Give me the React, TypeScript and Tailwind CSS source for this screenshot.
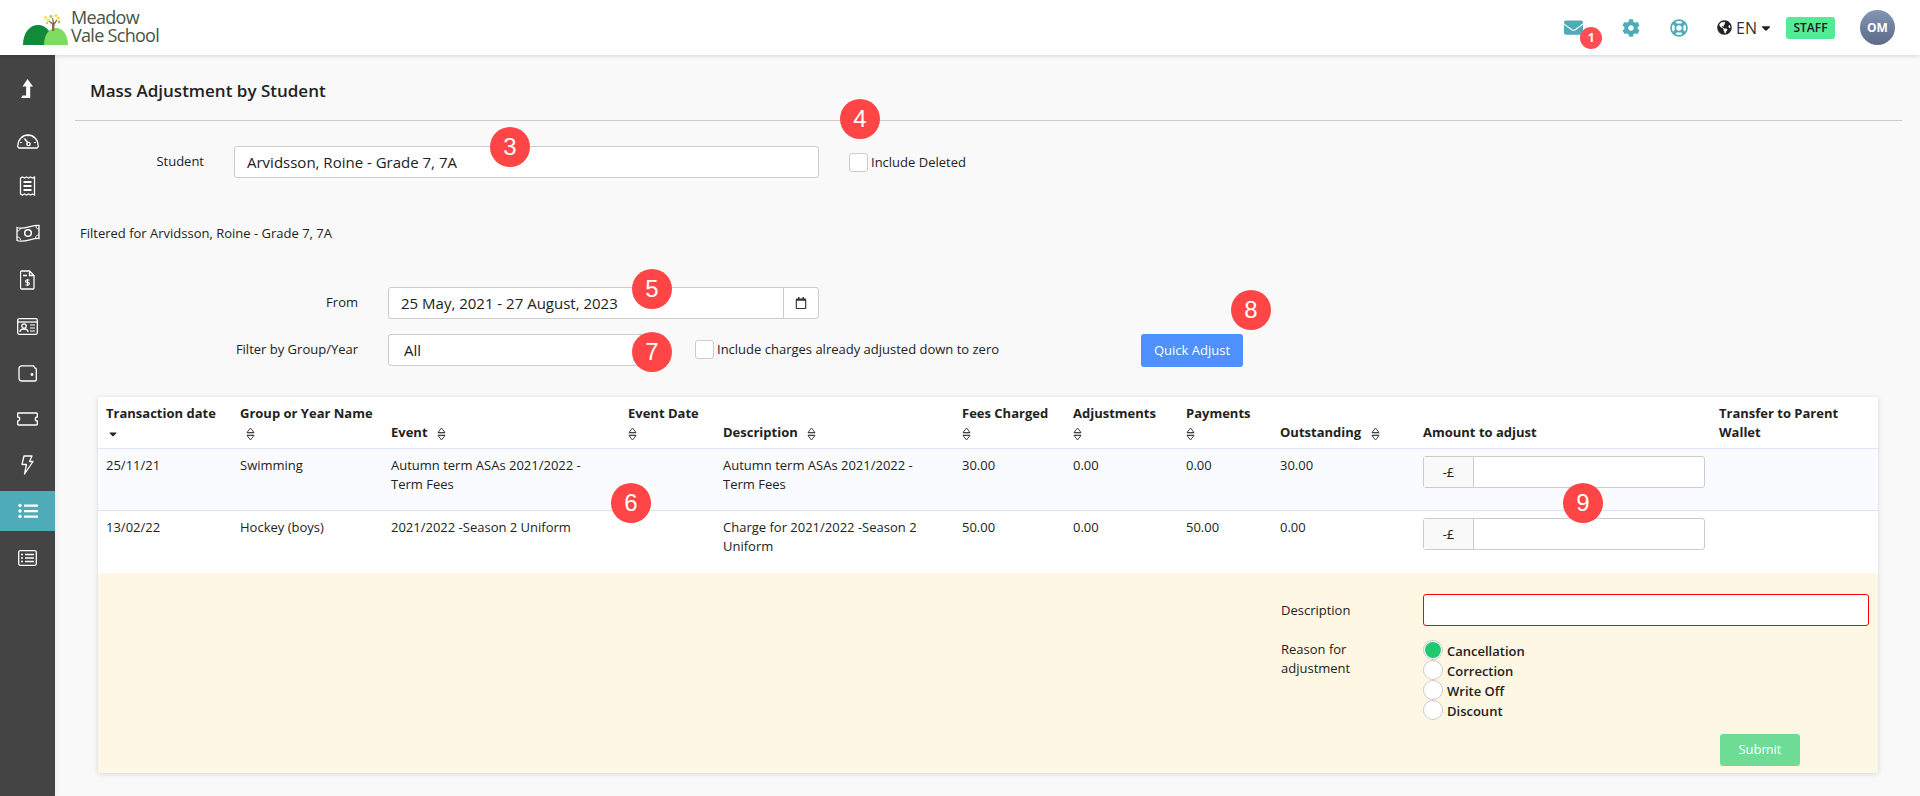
import { FaCaretDown, FaCog, FaEnvelope, FaGlobeAmericas, FaRegCalendar, FaRegLifeRing } from 'react-icons/fa';

function NumberPin({ n, pos }: { n: number; pos: string }) {
  return (
    <div className={`absolute z-20 flex h-10 w-10 items-center justify-center rounded-full bg-[#ff4545] text-[24px] leading-none text-white [font-family:'Liberation_Sans',sans-serif] ${pos}`}>
      {n}
    </div>
  );
}

function SortIcon({ className = '' }: { className?: string }) {
  return (
    <svg width="9" height="14" viewBox="0 0 9 14" className={`inline-block ${className}`}>
      <path d="M4.5 1 8 5.5H1Z" fill="none" stroke="#444" strokeWidth="1" />
      <path d="M1 8.5h7L4.5 13Z" fill="none" stroke="#444" strokeWidth="1" />
      <path d="M1 7h7" stroke="#444" strokeWidth="0.6" />
    </svg>
  );
}

function Logo() {
  return (
    <div className="flex items-center">
      <svg width="45" height="32" viewBox="0 0 45 32" className="mt-[4px]">
        <path d="M0 31C0 18 7 11 15 11s15 7 15 20Z" fill="#128a3c" />
        <path d="M21 31c0-10 5-17 12-17s12 7 12 17Z" fill="#7ddb5f" />
        <path d="M29 17h2.2l.3-6 3-5-1-.6-2.4 3.400-1-4.800h-1l.5 5-3.500-2.500-.6.8 3.600 3.400Z" fill="#8a6a3f" />
        <circle cx="22.500" cy="3.500" r="1.500" fill="#f2e04a" />
        <circle cx="25" cy="6" r="1.500" fill="#f2e04a" />
        <circle cx="33" cy="1.500" r="1.500" fill="#f2e04a" />
        <circle cx="35.500" cy="4" r="1.600" fill="#f2e04a" />
        <circle cx="28" cy="2.500" r="1.400" fill="#9fc85a" />
        <circle cx="36" cy="8" r="1.400" fill="#9fc85a" />
        <circle cx="24" cy="9" r="1" fill="#9fc85a" />
      </svg>
      <div className="mb-[3px] ml-[3px] text-[18px] leading-[18px] tracking-[-0.7px] text-[#47553f]">
        Meadow<br />Vale School
      </div>
    </div>
  );
}

function Header() {
  return (
    <header className="relative z-10 flex h-[55px] items-center bg-white pl-[23px] pr-[25px] shadow-[0_1px_4px_rgba(0,0,0,0.15)]">
      <Logo />
      <div className="ml-auto flex items-center">
        <div className="relative mr-[39px] h-[20px]">
          <FaEnvelope className="text-[19px] text-[#4eabb8]" />
          <span className="absolute left-[16px] top-[9px] flex h-[22px] w-[22px] items-center justify-center rounded-full bg-[#ff4d55] text-[12px] font-bold text-white">1</span>
        </div>
        <FaCog className="mr-[30px] text-[18px] text-[#4eabb8]" />
        <FaRegLifeRing className="mr-[29px] text-[18px] text-[#4eabb8]" />
        <FaGlobeAmericas className="mr-[4px] text-[15px] text-[#222]" />
        <span className="mr-[2px] text-[16px] text-[#333]">EN</span>
        <FaCaretDown className="mr-[13px] text-[14px] text-[#222]" />
        <span className="mr-[25px] flex h-[22px] w-[49px] items-center justify-center rounded-[3px] bg-[#55ea96] text-[12px] font-semibold text-[#1a1a1a]">STAFF</span>
        <span className="flex h-[35px] w-[35px] items-center justify-center rounded-full bg-gradient-to-b from-[#8296b5] to-[#5c6b85] text-[12px] font-bold text-white">OM</span>
      </div>
    </header>
  );
}

function UpArrowIcon() {
  return (
    <svg width="13" height="19" viewBox="0 0 13 19" fill="white">
      <path d="M6.500 0 12 7.500H9.200V19H0l1.500-2.500h3.600v-9H1.500Z" />
    </svg>
  );
}

function GaugeIcon() {
  return (
    <svg width="22" height="17" viewBox="0 0 22 17" fill="none" stroke="white" strokeWidth="1.300">
      <path d="M3 16h16a2 2 0 0 0 2-3A10 10 0 1 0 1 13a2 2 0 0 0 2 3Z" />
      <path d="M11 2.500v2M5 5l1.200 1.200M17 5l-1.200 1.200M3 10.500h1.800M19 10.500h-1.800" strokeWidth="1" />
      <path d="M7.500 6.500 11 11" strokeWidth="1.500" />
      <circle cx="11.500" cy="12" r="1.700" />
    </svg>
  );
}

function ReceiptIcon() {
  return (
    <svg width="17" height="20" viewBox="0 0 17 20" fill="none" stroke="white" strokeWidth="1.300">
      <path d="M1.500 2 3.500 1l2 1 2-1 2 1 2-1 2 1 2-1v18l-2-1-2 1-2-1-2 1-2-1-2 1-2-1Z" />
      <path d="M4.500 6h8M4.500 10h8M4.500 14h8" strokeWidth="1.800" />
    </svg>
  );
}

function MoneyIcon() {
  return (
    <svg width="24" height="18" viewBox="0 0 24 18" fill="none" stroke="white" strokeWidth="1.300">
      <path d="M1 3.500C8 6 15 1 23 1.500v13C16 14 8 19 1 16.500Z" />
      <circle cx="12" cy="9" r="3.300" strokeWidth="1.500" />
      <path d="M1 7c2 0 3-1 3.500-3M23 5c-2 0-3-1-3-3M1 13c2 0 3 .5 3.500 3M23 11c-2 0-3 .5-3.500 3" strokeWidth="1" />
    </svg>
  );
}

function FileDollarIcon() {
  return (
    <svg width="15" height="20" viewBox="0 0 15 20" fill="none" stroke="white" strokeWidth="1.300">
      <path d="M1.500 1h8l4.500 4.500V18a1 1 0 0 1-1 1H1.500a1 1 0 0 1-1-1V2a1 1 0 0 1 1-1Z" />
      <path d="M9.500 1v4.500H14M3 5.500h4" />
      <path d="M9.500 10H6.800a1.200 1.200 0 0 0 0 2.500h1.400a1.200 1.200 0 0 1 0 2.500H5.500M7.500 9v7" strokeWidth="1.100" />
    </svg>
  );
}

function IdCardIcon() {
  return (
    <svg width="21" height="17" viewBox="0 0 21 17" fill="none" stroke="white" strokeWidth="1.300">
      <rect x="0.700" y="0.700" width="19.600" height="15.600" rx="1.500" />
      <path d="M1 4h19" />
      <circle cx="7" cy="8" r="2.200" />
      <path d="M3 14c0-2 1.500-3 4-3s4 1 4 3" />
      <path d="M13 7h5M13 10h5M13 13h5" strokeWidth="1.200" />
    </svg>
  );
}

function WalletIcon() {
  return (
    <svg width="19" height="17" viewBox="0 0 19 17" fill="none" stroke="white" strokeWidth="1.300">
      <path d="M1 4.500V13a3 3 0 0 0 3 3h13a1.300 1.300 0 0 0 1.300-1.300V4.300A1.300 1.300 0 0 0 17 3L15.500.8H4a3 3 0 0 0-3 3.700Z" />
      <circle cx="14" cy="9.500" r="0.800" fill="white" />
    </svg>
  );
}

function TicketIcon() {
  return (
    <svg width="21" height="14" viewBox="0 0 21 14" fill="none" stroke="white" strokeWidth="1.300">
      <path d="M1.500 1h18a.8.8 0 0 1 .8.8V5a2 2 0 0 0 0 4v3.200a.8.8 0 0 1-.8.8h-18a.8.8 0 0 1-.8-.8V9a2 2 0 0 0 0-4V1.800a.8.8 0 0 1 .8-.8Z" />
    </svg>
  );
}

function BoltIcon() {
  return (
    <svg width="13" height="20" viewBox="0 0 13 20" fill="none" stroke="white" strokeWidth="1.300">
      <path d="M3 1h8L8.500 6.500H12L3.500 19l2-9.500H1Z" strokeLinejoin="round" />
    </svg>
  );
}

function ListIcon() {
  return (
    <svg width="20" height="16" viewBox="0 0 20 16" fill="white">
      <circle cx="2" cy="2.500" r="1.700" />
      <circle cx="2" cy="8" r="1.700" />
      <circle cx="2" cy="13.500" r="1.700" />
      <rect x="6" y="1.500" width="14" height="2.200" rx="0.500" />
      <rect x="6" y="7" width="14" height="2.200" rx="0.500" />
      <rect x="6" y="12.500" width="14" height="2.200" rx="0.500" />
    </svg>
  );
}

function ListBoxIcon() {
  return (
    <svg width="19" height="16" viewBox="0 0 19 16" fill="none" stroke="white" strokeWidth="1.300">
      <rect x="0.700" y="0.700" width="17.600" height="14.600" rx="1.500" />
      <path d="M7 4.500h9M7 8h9M7 11.500h9M3 4.500h2M3 8h2M3 11.500h2" strokeWidth="1.500" />
    </svg>
  );
}

function Sidebar() {
  const items = [
    { h: 'h-[46px]', icon: <GaugeIcon /> },
    { h: 'h-[46px]', icon: <ReceiptIcon /> },
    { h: 'h-[47px]', icon: <MoneyIcon /> },
    { h: 'h-[47px]', icon: <FileDollarIcon /> },
    { h: 'h-[47px]', icon: <IdCardIcon /> },
    { h: 'h-[46px]', icon: <WalletIcon /> },
    { h: 'h-[46px]', icon: <TicketIcon /> },
    { h: 'h-[46px]', icon: <BoltIcon /> },
  ];
  return (
    <aside className="flex w-[55px] shrink-0 flex-col items-stretch bg-[#444444] shadow-[2px_0_4px_rgba(0,0,0,0.05)]">
      <div className="flex h-[62px] items-center justify-center pt-[4px]">
        <UpArrowIcon />
      </div>
      {items.map((item, i) => (
        <div key={i} className={`flex items-center justify-center ${item.h}`}>
          {item.icon}
        </div>
      ))}
      <div className="mt-[3px] flex h-[40px] items-center justify-center bg-[#4eabb8]">
        <ListIcon />
      </div>
      <div className="flex h-[54px] items-center justify-center">
        <ListBoxIcon />
      </div>
    </aside>
  );
}

function Checkbox() {
  return <span className="h-[19px] w-[19px] shrink-0 rounded-[3px] border border-[#cccccc] bg-white" />;
}

const columns = ['w-[134px]', 'w-[151px]', 'w-[237px]', 'w-[95px]', 'w-[239px]', 'w-[111px]', 'w-[113px]', 'w-[94px]', 'w-[143px]', 'w-[296px]', 'w-[167px]'];

const rows = [
  { date: '25/11/21', group: 'Swimming', event: 'Autumn term ASAs 2021/2022 - Term Fees', description: 'Autumn term ASAs 2021/2022 - Term Fees', fees: '30.00', adjustments: '0.00', payments: '0.00', outstanding: '30.00', bg: 'bg-[#f9fbfe]', td: 'px-2 pt-[7px] pb-[16px] align-top' },
  { date: '13/02/22', group: 'Hockey (boys)', event: '2021/2022 -Season 2 Uniform', description: 'Charge for 2021/2022 -Season 2 Uniform', fees: '50.00', adjustments: '0.00', payments: '50.00', outstanding: '0.00', bg: 'bg-white', td: 'px-2 pt-[7px] pb-[17px] align-top' },
];

function AdjustmentTable() {
  const th = 'px-2 pt-[7px] pb-[6px] text-left align-bottom font-bold';
  return (
    <table className="w-full table-fixed border-collapse text-[13px] leading-[19px] text-[#222]">
      <colgroup>
        {columns.map((c) => (
          <col key={c} className={c} />
        ))}
      </colgroup>
      <thead>
        <tr>
          <th className={th}>Transaction date<div className="h-[19px] pl-[1px]"><FaCaretDown className="inline-block text-[12px] text-[#222]" /></div></th>
          <th className={th}>Group or Year Name<div className="h-[19px] pl-[6px]"><SortIcon /></div></th>
          <th className={th}>Event <SortIcon className="ml-[6px]" /></th>
          <th className={th}>Event Date<div className="h-[19px]"><SortIcon /></div></th>
          <th className={th}>Description <SortIcon className="ml-[6px]" /></th>
          <th className={th}>Fees Charged<div className="h-[19px]"><SortIcon /></div></th>
          <th className={th}>Adjustments<div className="h-[19px]"><SortIcon /></div></th>
          <th className={th}>Payments<div className="h-[19px]"><SortIcon /></div></th>
          <th className={th}>Outstanding <SortIcon className="ml-[6px]" /></th>
          <th className={th}>Amount to adjust</th>
          <th className={th}>Transfer to Parent Wallet</th>
        </tr>
      </thead>
      <tbody>
        {rows.map((r) => (
          <tr key={r.date} className={`border-t border-[#dbe7f5] ${r.bg}`}>
            <td className={r.td}>{r.date}</td>
            <td className={r.td}>{r.group}</td>
            <td className={r.td}>{r.event}</td>
            <td className={r.td}></td>
            <td className={r.td}>{r.description}</td>
            <td className={r.td}>{r.fees}</td>
            <td className={r.td}>{r.adjustments}</td>
            <td className={r.td}>{r.payments}</td>
            <td className={r.td}>{r.outstanding}</td>
            <td className={r.td}>
              <div className="flex h-[32px] w-[282px] rounded-[3px] border border-[#cccccc] bg-white">
                <span className="flex w-[50px] items-center justify-center border-r border-[#cccccc] bg-[#f9f9f9]">-£</span>
              </div>
            </td>
            <td className={r.td}></td>
          </tr>
        ))}
      </tbody>
    </table>
  );
}

function AdjustmentForm() {
  const reasons = ['Cancellation', 'Correction', 'Write Off', 'Discount'];
  return (
    <div className="h-[200px] bg-[#fdf7e3] pl-[1183px] pt-[21px] text-[13px] text-[#222]">
      <div className="flex items-center">
        <label className="mt-[1px] w-[142px]">Description</label>
        <div className="h-[32px] w-[446px] rounded-[3px] border border-[#ff0000] bg-white" />
      </div>
      <div className="mt-[14px] flex">
        <label className="w-[142px] leading-[19px]">Reason for<br />adjustment</label>
        <div className="flex flex-col">
          {reasons.map((reason, i) => (
            <div key={reason} className="flex h-[20px] items-center">
              <span className="flex h-[20px] w-[20px] shrink-0 items-center justify-center rounded-full border border-[#cccccc] bg-white">
                {i === 0 && <span className="h-[16px] w-[16px] rounded-full bg-[#1fc96e]" />}
              </span>
              <span className="ml-[4px] mt-[4px] font-semibold">{reason}</span>
            </div>
          ))}
        </div>
      </div>
      <button className="ml-[439px] mt-[14px] h-[32px] w-[80px] rounded-[3px] bg-[#6fdc95] text-[13px] text-white">Submit</button>
    </div>
  );
}

export default function App() {
  return (
    <div className="relative flex h-[796px] flex-col overflow-hidden bg-[#f9f9f9] text-[13px] text-[#222] [font-family:'Open_Sans',sans-serif]">
      <Header />
      <div className="flex min-h-0 flex-1">
        <Sidebar />
        <main className="min-w-0 flex-1 pl-[20px] pr-[18px]">
          <h1 className="flex h-[65px] items-center pl-[15px] pt-[7px] text-[17px] font-semibold text-[#222]">Mass Adjustment by Student</h1>
          <div className="border-t border-[#cccccc]" />
          <div className="mt-[25px] flex items-center">
            <label className="w-[129px] text-right text-[13px]">Student</label>
            <div className="ml-[30px] flex h-[32px] w-[585px] items-center rounded-[3px] border border-[#cccccc] bg-white pl-[12px] text-[15px]">
              Arvidsson, Roine - Grade 7, 7A
            </div>
            <div className="ml-[30px] flex items-center">
              <Checkbox />
              <span className="ml-[3px] mt-[2px] text-[13px]">Include Deleted</span>
            </div>
          </div>
          <p className="ml-[5px] mt-[46px] text-[13px] leading-[18px]">Filtered for Arvidsson, Roine - Grade 7, 7A</p>
          <div className="mt-[45px] flex items-center">
            <label className="w-[283px] text-right">From</label>
            <div className="ml-[30px] flex h-[32px] w-[431px] items-center rounded-[3px] border border-[#cccccc] bg-white text-[15px]">
              <span className="flex-1 pl-[12px]">25 May, 2021 - 27 August, 2023</span>
              <span className="flex h-full w-[35px] items-center justify-center border-l border-[#cccccc]">
                <FaRegCalendar className="text-[12px] text-[#333]" />
              </span>
            </div>
          </div>
          <div className="mt-[15px] flex items-start">
            <label className="w-[283px] pt-[6px] text-right">Filter by Group/Year</label>
            <div className="ml-[30px] flex h-[32px] w-[262px] items-center rounded-[3px] border border-[#cccccc] bg-white pl-[15px] text-[15px]">All</div>
            <div className="ml-[45px] mt-[5px] flex items-center">
              <Checkbox />
              <span className="ml-[3px] mt-[1px] text-[13px]">Include charges already adjusted down to zero</span>
            </div>
            <button className="ml-[142px] h-[33px] w-[102px] rounded-[3px] bg-[#4d90fe] text-[13px] text-white">Quick Adjust</button>
          </div>
          <section className="ml-[23px] mt-[30px] w-[1780px] rounded-[2px] bg-white shadow-[0_1px_5px_rgba(0,0,0,0.15)]">
            <AdjustmentTable />
            <AdjustmentForm />
          </section>
        </main>
      </div>
      <NumberPin n={3} pos="left-[490px] top-[127px]" />
      <NumberPin n={4} pos="left-[840px] top-[99px]" />
      <NumberPin n={5} pos="left-[632px] top-[269px]" />
      <NumberPin n={6} pos="left-[611px] top-[483px]" />
      <NumberPin n={7} pos="left-[632px] top-[332px]" />
      <NumberPin n={8} pos="left-[1231px] top-[290px]" />
      <NumberPin n={9} pos="left-[1563px] top-[483px]" />
    </div>
  );
}
